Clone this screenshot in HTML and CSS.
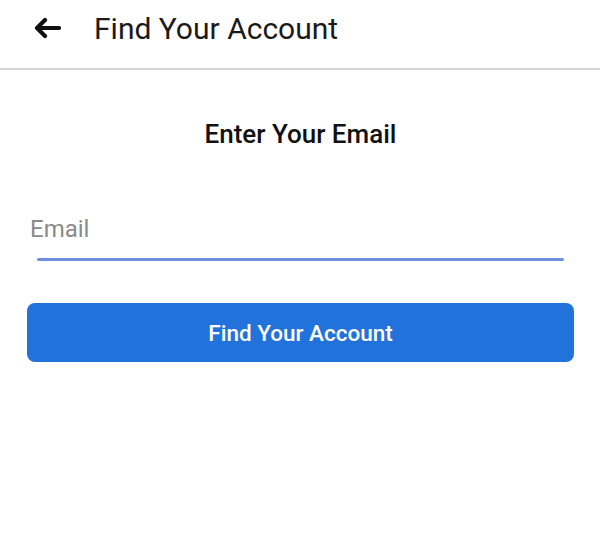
FILE: index.html
```html
<!DOCTYPE html>
<html lang="en">
<head>
  <meta charset="UTF-8" />
  <meta name="viewport" content="width=device-width, initial-scale=1.0"/>
  <title>Find Your Account</title>
  <link rel="stylesheet" href="styles.css">
</head>
<body>
  <div class="app-bar">
    <div class="back">
      <svg width="28" height="22" viewBox="0 0 28 22">
        <path d="M26 11 H4 M12 3 L4 11 L12 19" fill="none" stroke="#111" stroke-width="4.2" stroke-linecap="round" stroke-linejoin="round"/>
      </svg>
    </div>
    <div class="title">Find Your Account</div>
  </div>

  <div class="content">
    <div class="heading">Enter Your Email</div>
    <div class="field">
      <div class="placeholder">Email</div>
      <div class="underline"></div>
    </div>
    <div class="button">Find Your Account</div>
  </div>
</body>
</html>
```

FILE: styles.css
```css
body {
  margin: 0;
  background-color: #ffffff;
  font-family: Roboto, "Noto Sans", sans-serif;
  color: #111;
}

.app-bar {
  display: flex;
  align-items: center;
  height: 56px;
  padding: 0 0 12px 33px;
  border-bottom: 2px solid #d4d4d4;
}

.back {
  width: 28px;
  height: 22px;
}

.back svg {
  display: block;
}

.title {
  margin-left: 33px;
  font-size: 30px;
  color: #1a1a1a;
}

.content {
  padding: 0 26px 0 27px;
}

.heading {
  text-align: center;
  font-size: 26px;
  font-weight: 500;
  margin-top: 49px;
  color: #111;
}

.field {
  margin-top: 66px;
}

.placeholder {
  font-size: 24px;
  color: #8a8a8a;
  padding-left: 3px;
  line-height: 28px;
}

.underline {
  height: 3px;
  background-color: #6f8fe0;
  margin: 15px 10px 0 10px;
  border-radius: 2px;
}

.button {
  margin-top: 42px;
  height: 59px;
  background-color: #2272dc;
  border-radius: 8px;
  color: #ffffff;
  font-size: 22.5px;
  font-weight: 500;
  display: flex;
  align-items: center;
  justify-content: center;
}
```
